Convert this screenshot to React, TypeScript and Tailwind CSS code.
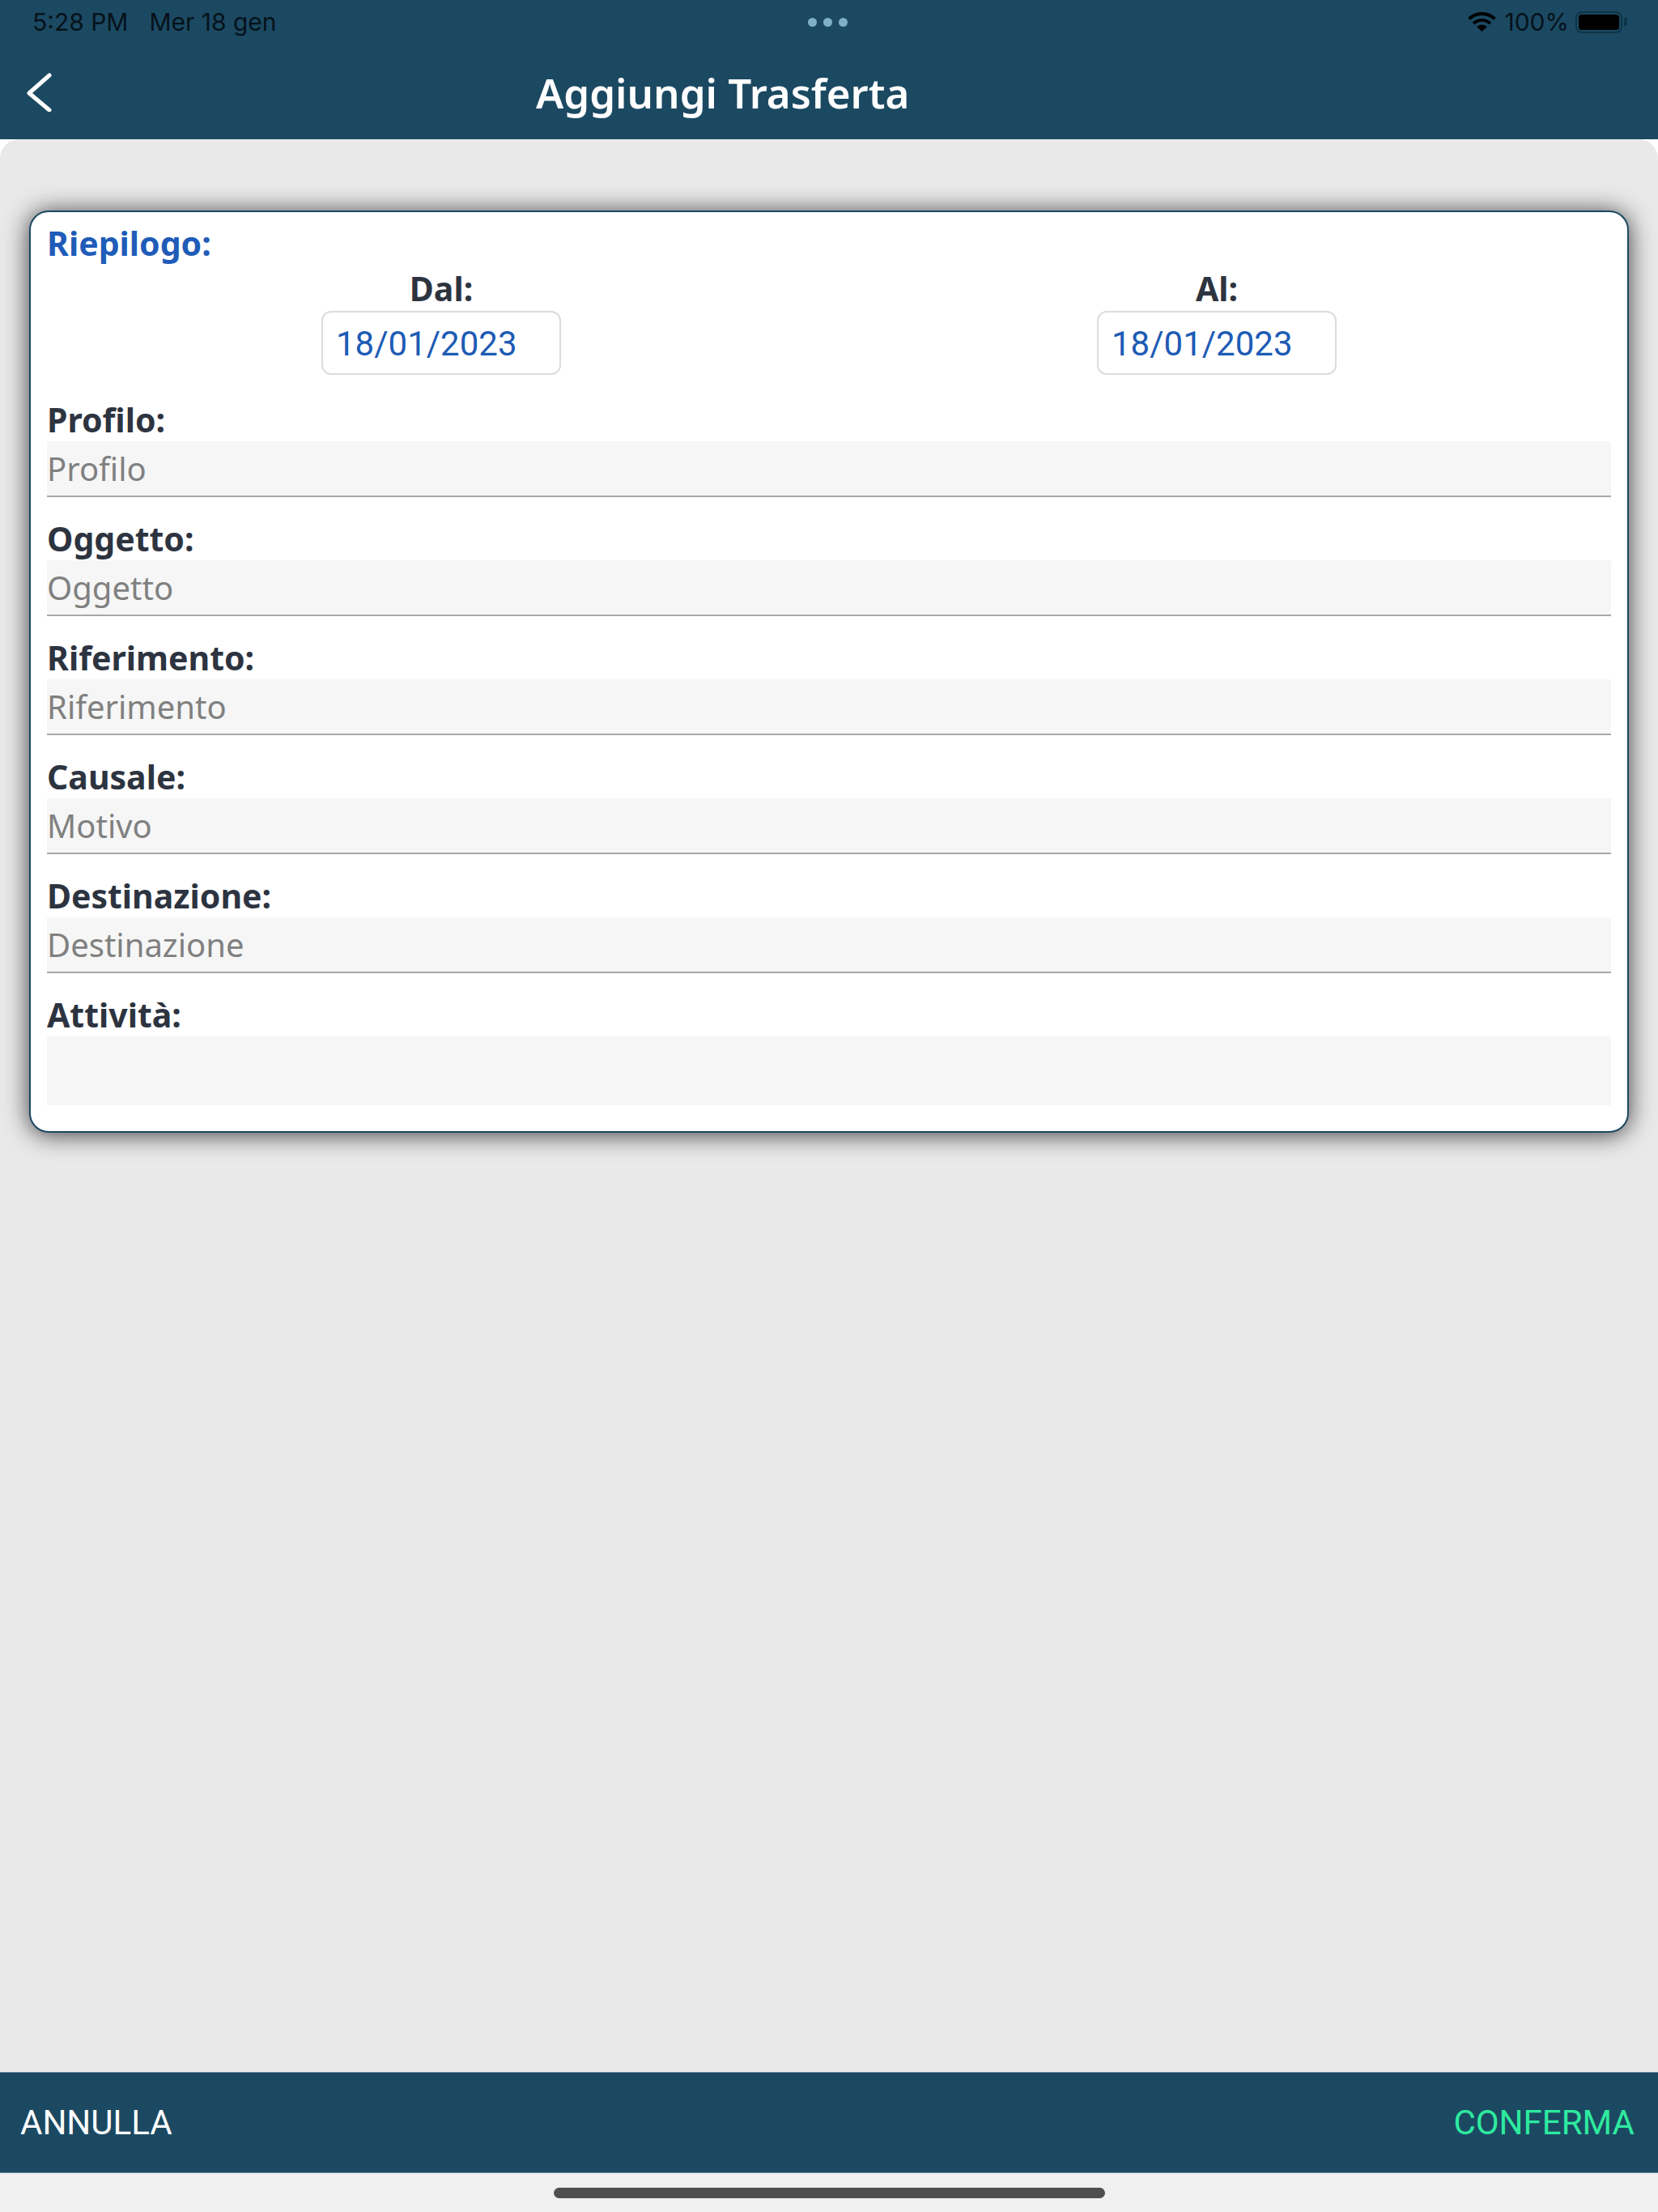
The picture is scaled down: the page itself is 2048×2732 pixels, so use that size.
import React from 'react';
import type { FC } from 'react';

const FIELDS = [
  { label: 'Profilo', placeholder: 'Profilo' },
  { label: 'Oggetto', placeholder: 'Oggetto' },
  { label: 'Riferimento', placeholder: 'Riferimento' },
  { label: 'Causale', placeholder: 'Motivo' },
  { label: 'Destinazione', placeholder: 'Destinazione' },
];

const WifiIcon: FC = () => (
  <svg width="35" height="24" viewBox="0 0 35 24" fill="#000">
    <path d="M17.5 0C10.8 0 4.8 2.6 0.3 6.9l2.6 2.8C6.7 6.1 11.8 3.9 17.5 3.9s10.8 2.2 14.6 5.8l2.6-2.8C30.2 2.6 24.2 0 17.5 0z" />
    <path d="M17.5 7.9c-4.5 0-8.6 1.8-11.7 4.6l2.7 2.9c2.4-2.2 5.5-3.6 9-3.6s6.6 1.4 9 3.6l2.7-2.9c-3.1-2.8-7.2-4.6-11.7-4.6z" />
    <path d="M17.5 15.6c-2.5 0-4.7 1-6.4 2.5l6.4 5.9 6.4-5.9c-1.7-1.5-3.9-2.5-6.4-2.5z" />
  </svg>
);

const StatusBar: FC = () => (
  <div className="relative flex h-[54px] items-center justify-between pl-[40px] pr-[38px] font-['Inter',sans-serif] text-[30px] text-[#06121a]">
    <div className="flex gap-[26px]">
      <span>5:28 PM</span>
      <span>Mer 18 gen</span>
    </div>
    <div className="absolute left-[998px] top-[22px] flex gap-[8px]">
      <span className="h-[11px] w-[11px] rounded-full bg-[#7fb0c8]"></span>
      <span className="h-[11px] w-[11px] rounded-full bg-[#7fb0c8]"></span>
      <span className="h-[11px] w-[11px] rounded-full bg-[#7fb0c8]"></span>
    </div>
    <div className="flex items-center">
      <WifiIcon />
      <span className="ml-[10px]">100%</span>
      <div className="ml-[8px] flex h-[27px] w-[58px] items-center justify-center rounded-[8px] border-2 border-[#0f3347]">
        <div className="h-[19px] w-[50px] rounded-[4px] bg-black"></div>
      </div>
      <div className="ml-[2px] h-[10px] w-[4px] rounded-r-[2px] bg-[#0f3347]"></div>
    </div>
  </div>
);

const DateBox: FC<{ label: string; value: string }> = ({ label, value }) => (
  <div className="flex w-[296px] flex-col items-center">
    <label className="h-[40px] text-[41px] font-bold leading-[40px] text-[#2d3440]">{label}</label>
    <input
      readOnly
      value={value}
      className="mt-[8px] h-[79px] w-[296px] rounded-[12px] border-2 border-[#dcdcdc] bg-white pl-[16px] pt-[2px] font-['Roboto',sans-serif] text-[42px] text-[#1d5bb5] outline-none"
    />
  </div>
);

export default function App() {
  return (
    <div className="flex h-[2732px] w-[2048px] flex-col bg-white font-['Noto_Sans',sans-serif]">
      <header className="h-[172px] bg-[#1b4962]">
        <StatusBar />
        <div className="relative flex h-[118px] items-start pl-[662px]">
          <svg className="absolute left-[30px] top-[36px]" width="36" height="48" viewBox="0 0 36 48" fill="none">
            <polyline points="31,3 6,25 31,46" stroke="#fff" strokeWidth="5" strokeLinecap="round" strokeLinejoin="round" />
          </svg>
          <h1 className="mt-[30px] text-[51px] font-semibold leading-[60px] text-white">Aggiungi Trasferta</h1>
        </div>
      </header>

      <main className="flex-1 rounded-t-[24px] bg-[#e9e9e9] px-[36px] pt-[88px]">
        <section className="h-[1139px] rounded-[24px] border-2 border-[#1b4962] bg-white px-[20px] pt-[18px] shadow-[0_2px_30px_rgba(0,0,0,0.75)]">
          <h2 className="h-[40px] text-[41px] font-bold leading-[40px] text-[#1f5cb8]">Riepilogo:</h2>
          <div className="mt-[16px] flex justify-between px-[339px]">
            <DateBox label="Dal:" value="18/01/2023" />
            <DateBox label="Al:" value="18/01/2023" />
          </div>
          <div className="mt-[35px] flex flex-col">
            {FIELDS.map(field => (
              <div key={field.label} className="mb-[31px] flex flex-col gap-[7px]">
                <label className="h-[40px] text-[41px] font-bold leading-[40px] text-[#2d3440]">{field.label}:</label>
                <input
                  placeholder={field.placeholder}
                  className="h-[69px] w-full border-b-2 border-[#a8a8a8] bg-[#f6f6f6] text-[40px] text-[#333] outline-none placeholder:text-[#808080]"
                />
              </div>
            ))}
            <div className="flex flex-col gap-[7px]">
              <label className="h-[40px] text-[41px] font-bold leading-[40px] text-[#2d3440]">Attività:</label>
              <textarea className="h-[85px] w-full resize-none bg-[#f6f6f6] outline-none"></textarea>
            </div>
          </div>
        </section>
      </main>

      <footer className="flex h-[125px] items-center justify-between border-y border-[#6f8ea0] bg-[#1b4962] pl-[25px] pr-[29px] font-['Roboto',sans-serif] text-[42px] font-normal">
        <button className="text-white">ANNULLA</button>
        <button className="text-[#2eea9f]">CONFERMA</button>
      </footer>

      <div className="flex h-[48px] justify-center bg-[#f0f0f0] pt-[18px]">
        <div className="h-[13px] w-[681px] rounded-full bg-[#4f4f4f]"></div>
      </div>
    </div>
  );
}
